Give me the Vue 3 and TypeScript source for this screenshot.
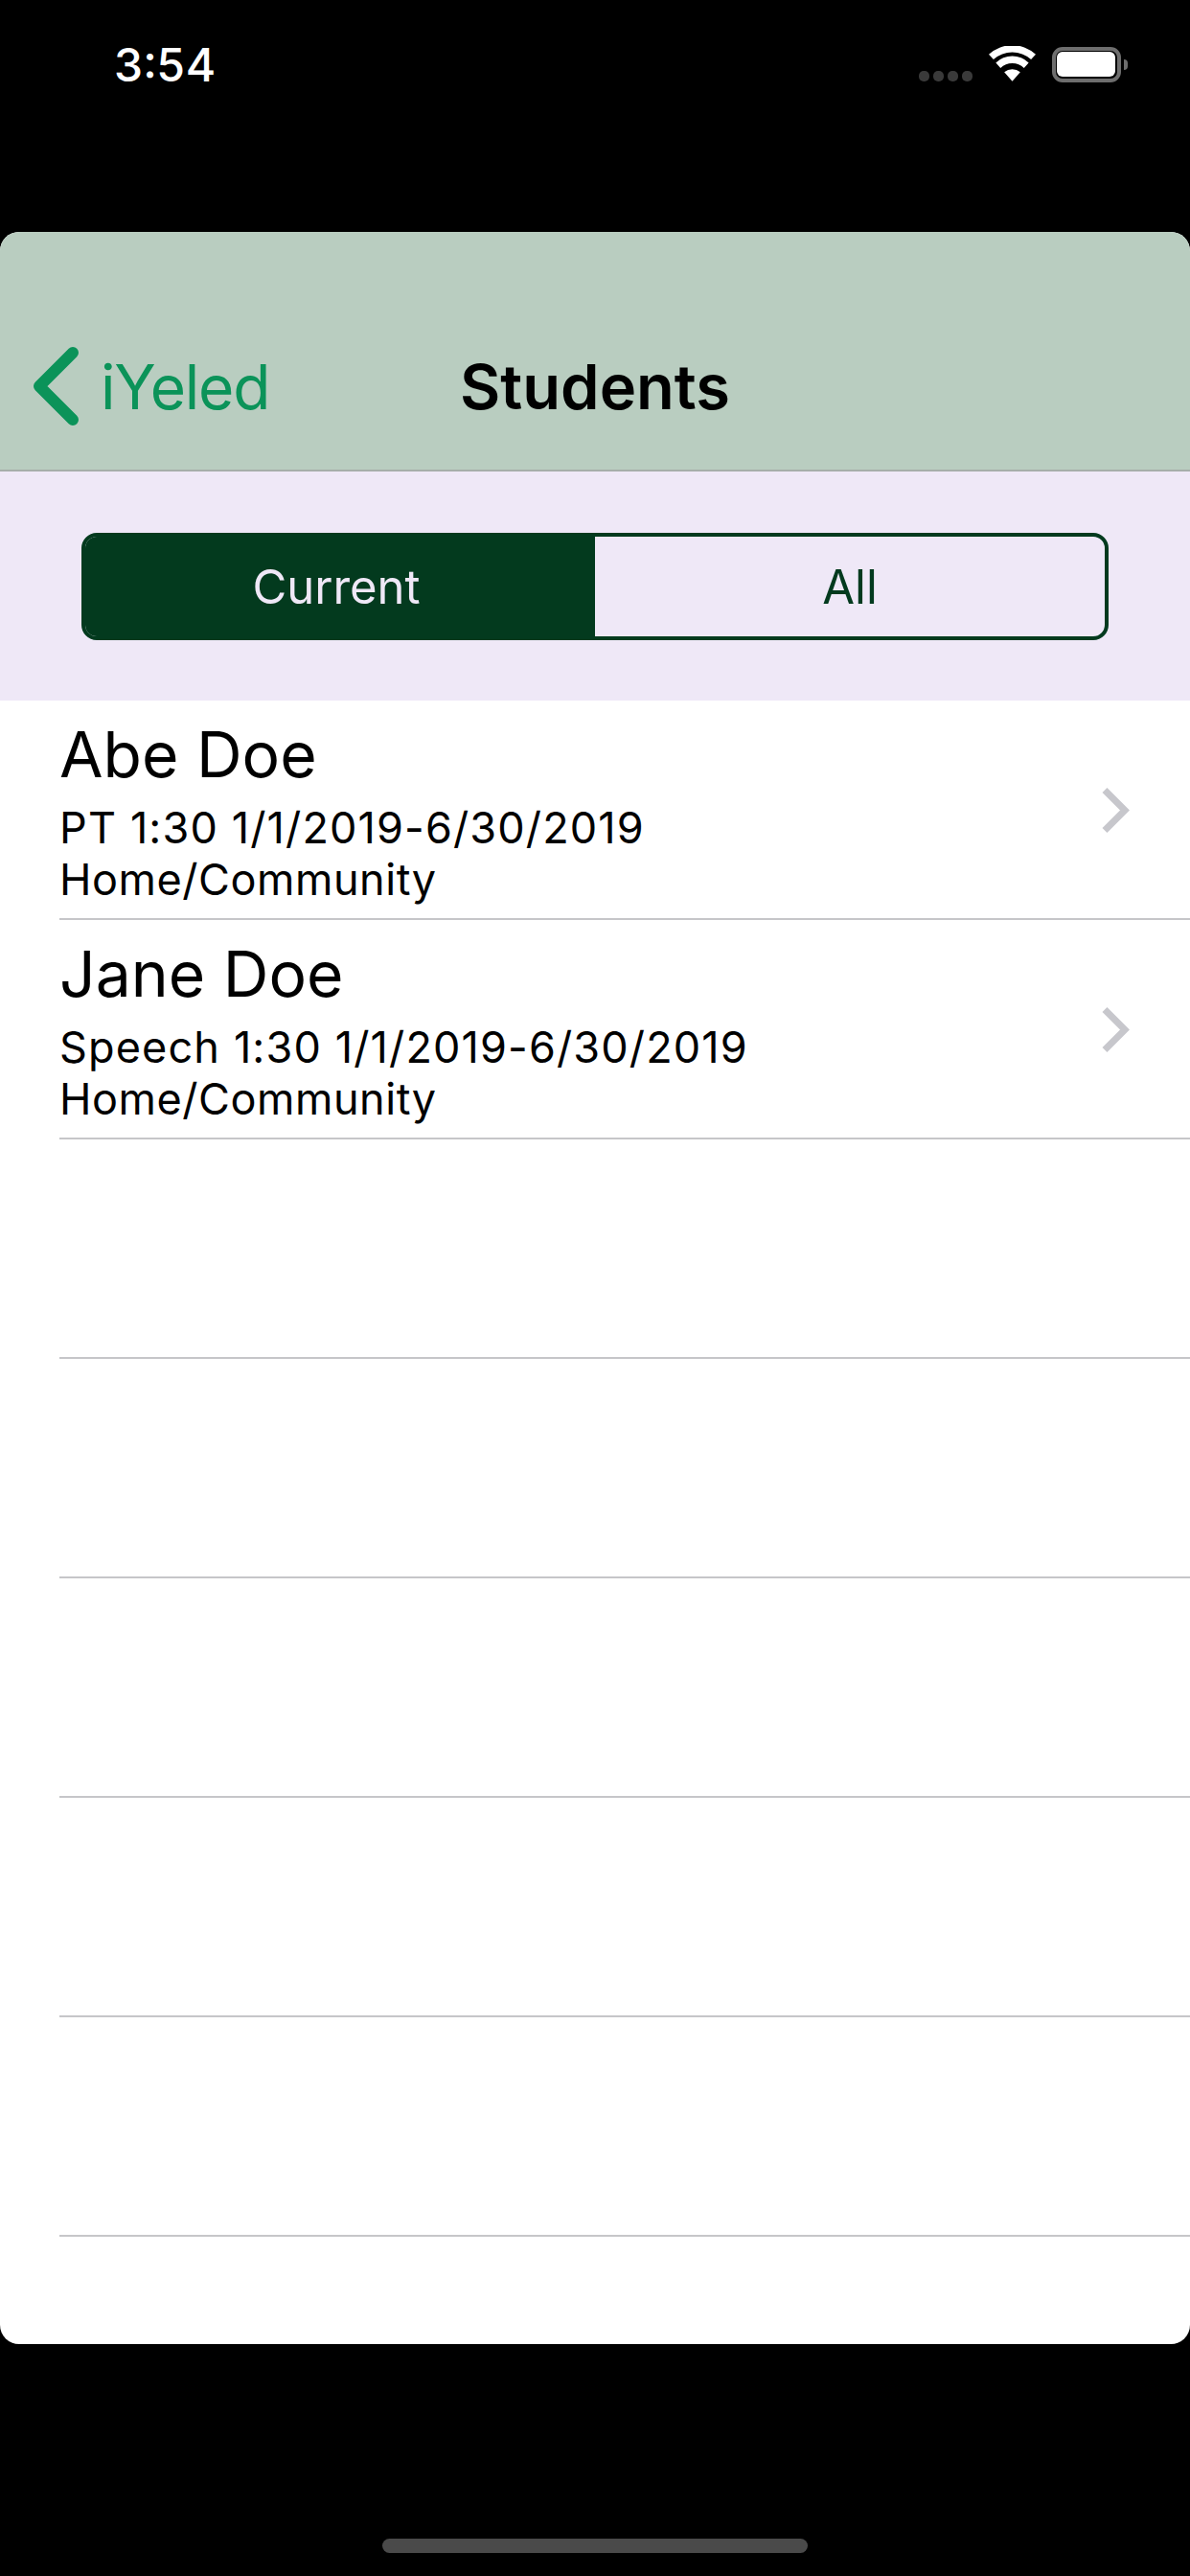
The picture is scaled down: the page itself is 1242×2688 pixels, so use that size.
<script setup lang="ts">
interface Student {
  name: string
  detail: string
  place: string
}

const students: Student[] = [
  { name: 'Abe Doe', detail: 'PT 1:30 1/1/2019-6/30/2019', place: 'Home/Community' },
  { name: 'Jane Doe', detail: 'Speech 1:30 1/1/2019-6/30/2019', place: 'Home/Community' },
]
const emptyRows = 5
</script>

<template>
  <div class="screen">
    <header class="status">
      <span class="time">3:54</span>
      <div class="status-icons">
        <div class="signal"><i></i><i></i><i></i><i></i></div>
        <svg class="wifi" width="49" height="37" viewBox="0 0 50 37">
          <path d="M25 37 L16.5 27.5 A13 13 0 0 1 33.5 27.5 Z" fill="#fff" />
          <path d="M12.5 23 L7.5 17.5 A25 25 0 0 1 42.5 17.5 L37.5 23 A18 18 0 0 0 12.5 23 Z" fill="#fff" />
          <path d="M5 14 L0 8.5 A37 37 0 0 1 50 8.5 L45 14 A30 30 0 0 0 5 14 Z" fill="#fff" />
        </svg>
        <div class="battery"><div class="battery-fill"></div><div class="battery-nub"></div></div>
      </div>
    </header>

    <main class="card">
      <nav class="navbar">
        <div class="back">
          <svg width="52" height="86" viewBox="0 0 52 86">
            <path d="M44 8 L9 43 L44 78" fill="none" stroke="#0b9359" stroke-width="12" stroke-linecap="round" stroke-linejoin="round" />
          </svg>
          <span class="back-label">iYeled</span>
        </div>
        <h1 class="title">Students</h1>
      </nav>

      <section class="segment-bar">
        <div class="segment">
          <div class="seg seg-on">Current</div>
          <div class="seg">All</div>
        </div>
      </section>

      <ul class="list">
        <li v-for="s in students" :key="s.name" class="row">
          <div class="row-text">
            <div class="name">{{ s.name }}</div>
            <div class="sub detail">{{ s.detail }}</div>
            <div class="sub">{{ s.place }}</div>
          </div>
          <svg class="chev" width="32" height="52" viewBox="0 0 32 52">
            <path d="M4 5.5 L25 26.5 L4 47.5" fill="none" stroke="#c7c7cc" stroke-width="7" />
          </svg>
        </li>
        <li v-for="n in emptyRows" :key="n" class="row"></li>
      </ul>
    </main>

    <div class="home-area"><div class="home-bar"></div></div>
  </div>
</template>

<style>
html, body { margin: 0; background: #000; }
</style>

<style scoped>
.screen {
  width: 1242px;
  height: 2688px;
  background: #000;
  font-family: Inter, "Liberation Sans", sans-serif;
  overflow: hidden;
  display: flex;
  flex-direction: column;
}
.status {
  height: 242px;
  box-sizing: border-box;
  padding: 44px 72px 0 119px;
  display: flex;
  justify-content: space-between;
  align-items: flex-start;
  color: #fff;
}
.time { font-size: 48px; line-height: 48px; font-weight: 500; font-variant-numeric: tabular-nums; }
.status-icons { display: flex; align-items: flex-end; height: 38px; margin-top: 4px; }
.signal { display: flex; gap: 4px; margin-right: 17px; margin-bottom: 1px; }
.signal i { width: 11px; height: 11px; border-radius: 5px; background: #3a3a3a; display: block; }
.wifi { margin-right: 17px; margin-bottom: 1px; }
.battery {
  width: 72px; height: 37px; box-sizing: border-box;
  border: 4px solid #6e6e6e; border-radius: 11px; padding: 1px 2px 2px 1px; position: relative;
}
.battery-fill { width: 100%; height: 100%; background: #fff; border-radius: 6px; }
.battery-nub { position: absolute; right: -11px; top: 9px; width: 4px; height: 11px; background: #6e6e6e; border-radius: 0 5px 5px 0; }

.card {
  height: 2204px;
  border-radius: 20px;
  overflow: hidden;
  background: #fff;
  display: flex;
  flex-direction: column;
}
.navbar {
  height: 250px;
  box-sizing: border-box;
  background: #b9cdc0;
  border-bottom: 2px solid #a6aeaa;
  position: relative;
  display: flex;
  align-items: flex-end;
  justify-content: center;
  padding-bottom: 46px;
}
.back {
  position: absolute;
  left: 32px;
  bottom: 43px;
  display: flex;
  align-items: center;
  gap: 21px;
  color: #0b9359;
  font-size: 64px;
  letter-spacing: -1.2px;
  line-height: 86px;
}
.back-label { margin-top: 2px; }
.title { margin: 0; font-size: 65px; line-height: 80px; font-weight: 600; color: #000; }

.segment-bar {
  height: 239px;
  box-sizing: border-box;
  background: #efe8f7;
  padding: 64px 85px;
}
.segment {
  height: 112px;
  box-sizing: border-box;
  border: 4px solid #033a1e;
  border-radius: 16px;
  overflow: hidden;
  display: flex;
}
.seg {
  flex: 0 0 50%;
  box-sizing: border-box;
  display: flex;
  align-items: center;
  justify-content: center;
  font-size: 49px;
  color: #033a1e;
}
.seg-on { background: #033a1e; color: #efe8f7; padding-right: 8px; }

.list { list-style: none; margin: 0; padding: 0; }
.row {
  height: 229px;
  box-sizing: border-box;
  margin-left: 62px;
  border-bottom: 2px solid #c6c6c9;
  padding-right: 61px;
  display: flex;
  align-items: center;
  justify-content: space-between;
}
.name { font-size: 66px; line-height: 88px; color: #000; margin-top: -2px; margin-bottom: 6px; }
.sub { font-size: 45px; line-height: 54px; letter-spacing: 0.55px; color: #000; }
.detail { letter-spacing: 1.15px; }

.home-area { padding-top: 203px; display: flex; justify-content: center; }
.home-bar { width: 444px; height: 15px; border-radius: 8px; background: #4a4a4a; }
</style>
